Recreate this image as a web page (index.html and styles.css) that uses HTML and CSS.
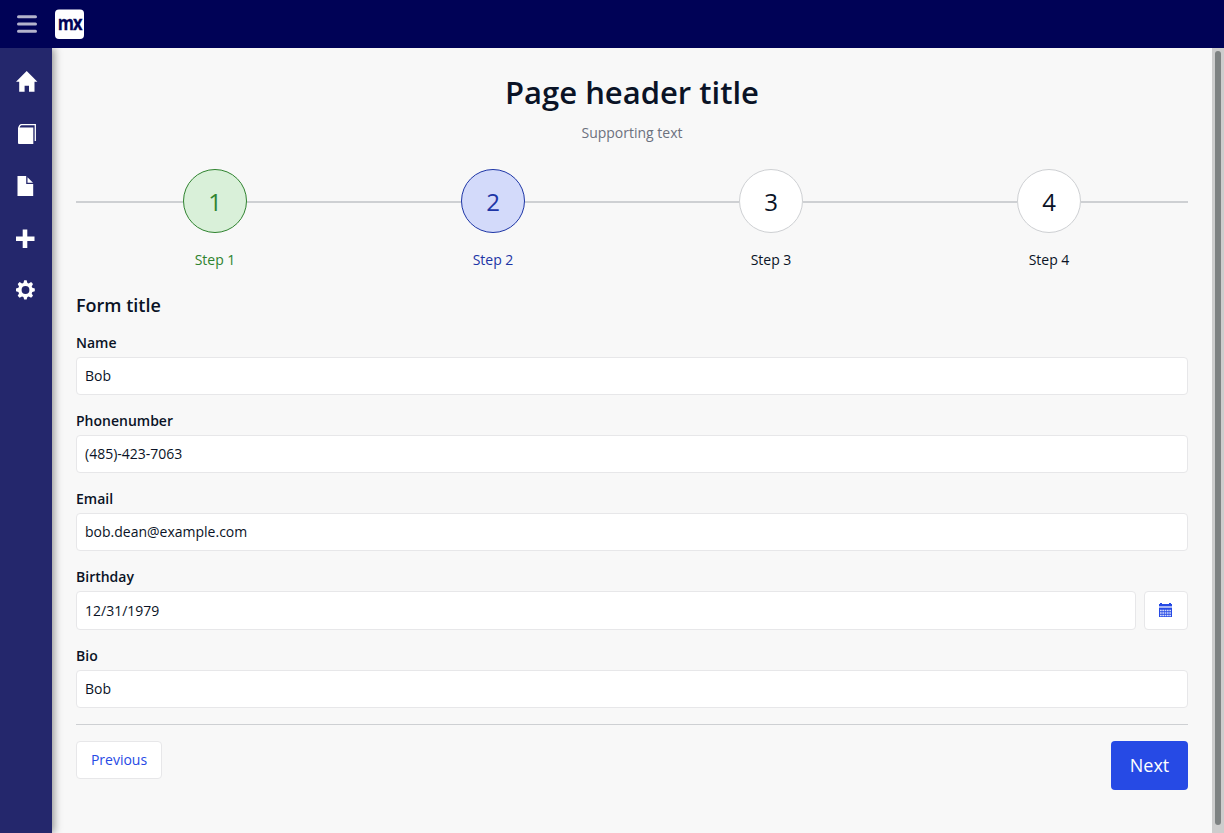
FILE: index.html
```
<!DOCTYPE html>
<html lang="en">
<head>
<meta charset="utf-8">
<title>Page header title</title>
<link rel="stylesheet" href="styles.css">
</head>
<body>
<div class="app">
  <header class="topbar">
    <svg class="menu-icon" viewBox="0 0 20 18" aria-label="Menu"><path d="M1.500 1.800h17M1.500 9h17M1.500 16.200h17"/></svg>
    <svg class="logo" viewBox="0 0 29 30"><rect y=".5" width="29" height="29.500" rx="4"/><text x="2.800" y="21" textLength="24" lengthAdjust="spacingAndGlyphs">mx</text></svg>
  </header>
  <div class="body">
    <nav class="sidebar">
      <svg viewBox="0 0 22 22"><path d="M10.700 0 21.400 10.700H18.500v10H13v-6H8.600v6H3.200V10.700H0z"/></svg>
      <svg viewBox="0 0 22 22"><path d="M2 4.500h15.300V21H3Q2 21 2 20z"/><path class="stroke" d="M2.800 5Q3.500 1.700 5.500 1.700H19.300V18"/></svg>
      <svg viewBox="0 0 22 22"><path d="M1.500 1h8.700v8h7v12h-15.700z"/><path d="M11.500 2.200 17 7.700H11.500z"/></svg>
      <svg viewBox="0 0 22 22"><path d="M6.700 2.500h4.600v7h7.200v4.500h-7.200v7H6.700v-7H0V9.500h6.700z"/></svg>
      <svg viewBox="0 0 22 22"><path fill-rule="evenodd" d="m8.200 1.200 2.400.1.800 2.600 1.300.5 2.400-1.300 1.900 1.900-1.300 2.400.6 1.400 2.500.8v2.600l-2.500.8-.6 1.400 1.300 2.400-1.900 1.900-2.400-1.300-1.300.5-.8 2.600H8.200l-.8-2.600-1.400-.5-2.400 1.300-1.900-1.900L3 14.400l-.6-1.400-2.400-.8V9.600l2.400-.8L3 7.400 1.700 5l1.900-1.900L6 4.400l1.400-.5zM9.500 7.100a3.900 3.900 0 1 0 0 7.800 3.900 3.900 0 0 0 0-7.800z"/></svg>
    </nav>
    <main class="content">
      <h1>Page header title</h1>
      <p class="support">Supporting text</p>
      <div class="wizard">
        <div class="step done"><div class="track"><span class="dot">1</span></div><span>Step 1</span></div>
        <div class="step active"><div class="track"><span class="dot">2</span></div><span>Step 2</span></div>
        <div class="step"><div class="track"><span class="dot">3</span></div><span>Step 3</span></div>
        <div class="step"><div class="track"><span class="dot">4</span></div><span>Step 4</span></div>
      </div>
      <h2>Form title</h2>
      <form class="form">
        <label class="field"><span>Name</span><input type="text" value="Bob"></label>
        <label class="field"><span>Phonenumber</span><input type="text" value="(485)-423-7063"></label>
        <label class="field"><span>Email</span><input type="text" value="bob.dean@example.com"></label>
        <div class="field">
          <span>Birthday</span>
          <div class="date-row">
            <input type="text" value="12/31/1979" aria-label="Birthday">
            <button type="button" class="calendar" aria-label="Open calendar"><svg viewBox="0 0 13 14"><path d="M0 1h1V0h2v1h7V0h2v1h1v2H0z"/><path class="band" d="M0 3h13v2H0z"/><path d="M0 5h13v9H0z"/><path class="cells" d="M1 7.500h11M1 10h11M1 12.500h11"/></svg></button>
          </div>
        </div>
        <label class="field"><span>Bio</span><input type="text" value="Bob"></label>
      </form>
      <div class="actions"><button class="previous">Previous</button><button class="next">Next</button></div>
    </main>
    <div class="scrollbar"><div class="thumb"></div></div>
  </div>
</div>
</body>
</html>
```
FILE: styles.css
```
* { box-sizing: border-box; }
body { margin: 0; background: #f8f8f8; color: #0a1326; font: 14px/20px "Open Sans", sans-serif; }
button, input { font: inherit; }
h1, h2, p { margin: 0; }
.app { height: 833px; display: flex; flex-direction: column; overflow: hidden; }
.topbar { height: 48px; flex: none; background: #000256; display: flex; align-items: center; padding-left: 17px; gap: 18px; }
.menu-icon { width: 20px; height: 18px; stroke: #b3b3cc; stroke-width: 3; stroke-linecap: round; }
.logo { width: 29px; height: 30px; fill: #fff; overflow: visible; }
.logo text { fill: #000256; font: 700 19.5px "Open Sans", sans-serif; letter-spacing: -1px; stroke: #000256; stroke-width: .3; }
.body { flex: 1; min-height: 0; display: flex; }
.sidebar { width: 52px; flex: none; background: #24276c; box-shadow: 2px 0 8px rgba(0, 0, 0, .42); clip-path: inset(0 -20px 0 0); display: flex; flex-direction: column; padding: 23px 0 0 16px; gap: 30px; }
.sidebar svg { width: 22px; height: 22px; fill: #fff; }
.sidebar .stroke { fill: none; stroke: #fff; stroke-width: 1.3; }
.content { flex: 1; padding: 23px 24px 0; }
h1 { font-size: 31px; line-height: 42px; font-weight: 600; text-align: center; }
.support { text-align: center; color: #6c717e; margin: 10px 0 26px; }
.wizard { display: flex; }
.step { flex: 1; text-align: center; }
.track { display: flex; align-items: center; margin-bottom: 17px; }
.track::before, .track::after { content: ""; flex: 1; height: 2px; margin-top: 2px; background: #ced0d3; }
.dot { width: 64px; height: 64px; border: 1px solid #ced0d3; border-radius: 50%; background: #fff; font-size: 24px; line-height: 64px; }
.done { color: #2f832f; }
.done .dot { background: #d9f0d9; border-color: #2f832f; }
.active { color: #1d35a6; }
.active .dot { background: #d3dafa; border-color: #1d35a6; }
h2 { font-size: 18px; line-height: 24px; font-weight: 600; margin: 23px 0 16px; }
.form { display: flex; flex-direction: column; gap: 16px; padding-bottom: 16px; border-bottom: 1px solid #ced0d3; }
.field { display: flex; flex-direction: column; gap: 4px; }
.field > span { font-weight: 600; }
input { height: 38px; border: 1px solid #e7e7e9; border-radius: 4px; padding: 0 8px 2px; background: #fff; color: #0a1326; min-width: 0; }
.date-row { display: flex; gap: 8px; }
.date-row input { flex: 1; height: 39px; padding-bottom: 0; }
.calendar { width: 44px; height: 39px; border: 1px solid #e7e7e9; border-radius: 4px; background: #fff; padding: 0 1px 1px 0; display: flex; align-items: center; justify-content: center; }
.calendar svg { width: 13px; height: 14px; fill: #264ae5; }
.calendar .band { fill: #a8b7f5; }
.calendar .cells { stroke: #d5dcfb; stroke-width: 1.5; stroke-dasharray: 1.700 .62; }
.actions { display: flex; justify-content: space-between; align-items: flex-start; margin-top: 16px; }
.previous { width: 86px; height: 38px; border: 1px solid #e7e7e9; border-radius: 4px; background: #fff; color: #264ae5; padding: 0; }
.next { width: 77px; height: 49px; border: 0; border-radius: 4px; background: #264ae5; color: #fff; font-size: 18px; padding: 0 0 2px; }
.scrollbar { width: 12px; flex: none; background: #cdcdcd; padding: 3px 3px 8px; }
.thumb { height: 100%; border-radius: 3px; background: #7e8282; }
```
